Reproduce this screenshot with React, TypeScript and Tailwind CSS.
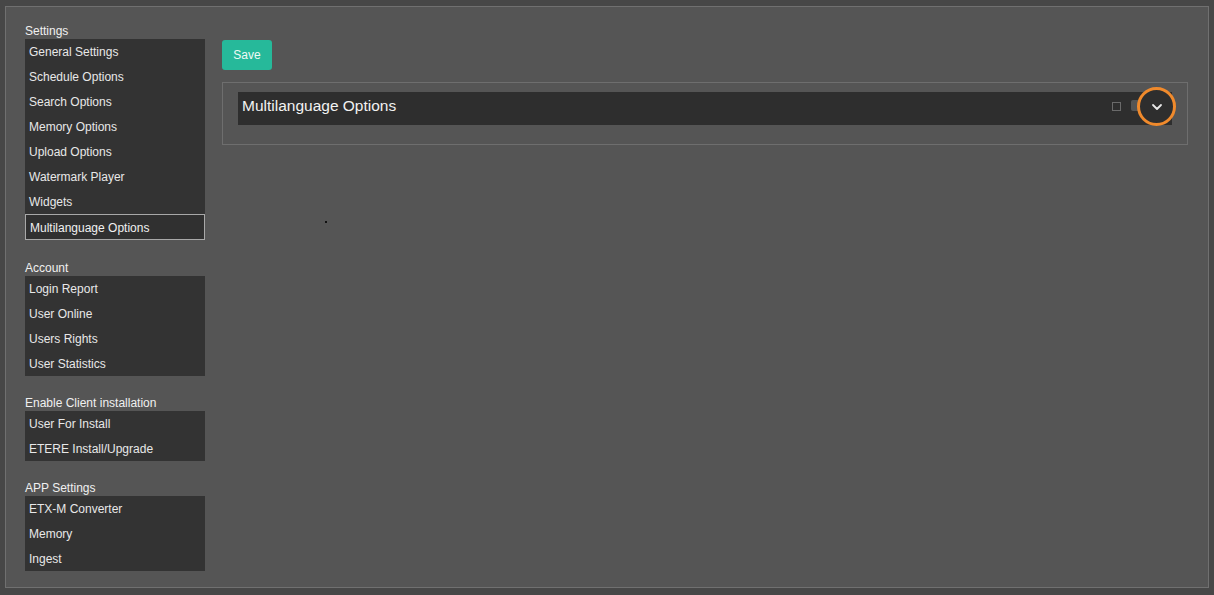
import React from "react";

const groups: { title: string; items: string[]; active?: string }[] = [
  {
    title: "Settings",
    items: [
      "General Settings",
      "Schedule Options",
      "Search Options",
      "Memory Options",
      "Upload Options",
      "Watermark Player",
      "Widgets",
      "Multilanguage Options",
    ],
    active: "Multilanguage Options",
  },
  { title: "Account", items: ["Login Report", "User Online", "Users Rights", "User Statistics"] },
  { title: "Enable Client installation", items: ["User For Install", "ETERE Install/Upgrade"] },
  { title: "APP Settings", items: ["ETX-M Converter", "Memory", "Ingest"] },
];

export default function App() {
  return (
    <div
      className="w-[1214px] h-[595px] bg-[#474747] pt-[6px] pl-[5px] overflow-hidden"
      style={{ fontFamily: '"Liberation Sans", Arial, sans-serif' }}
    >
      <div className="relative w-[1204px] h-[582px] border border-[#707070] bg-[#555555] flex pl-[19px] pt-[16px]">
        {/* Sidebar */}
        <div className="w-[180px] flex flex-col">
          {groups.map((g, gi) => (
            <div key={g.title} className={gi === 0 ? "" : gi === 1 ? "mt-[20px]" : "mt-[19px]"}>
              <div className="h-[16px] leading-[16px] text-[12px] text-[#f0f0f0]">{g.title}</div>
              <div className="bg-[#333333] flex flex-col">
                {g.items.map((it) =>
                  it === g.active ? (
                    <div
                      key={it}
                      className="h-[26px] leading-[24px] pt-[1px] border border-[#a8a8a8] bg-[#303030] pl-[4px] text-[12px] text-[#f0f0f0]"
                    >
                      {it}
                    </div>
                  ) : (
                    <div key={it} className="h-[25px] leading-[26px] pl-[4px] text-[12px] text-[#e8e8e8]">
                      {it}
                    </div>
                  )
                )}
              </div>
            </div>
          ))}
        </div>

        {/* Main */}
        <div className="ml-[17px] flex flex-col pt-[17px]">
          <button className="w-[50px] h-[30px] rounded-[3px] bg-[#26b99a] text-[12px] text-[#eefaf6] flex items-center justify-center">
            Save
          </button>
          <div className="mt-[12px] w-[966px] h-[63px] border border-[#6e6e6e] pt-[9px] pl-[15px] pr-[15px]">
            <div className="relative h-[33px] bg-[#2e2e2e] flex items-center pl-[4px]">
              <span className="text-[15.5px] leading-[20px] text-[#f2f2f2] pb-[6px]">Multilanguage Options</span>
              <div className="ml-auto mr-[51px] mb-[4px] w-[9px] h-[9px] border border-[#6a6a6a]" />
              <div className="absolute right-[30px] top-[8px] w-[11px] h-[11px] rounded-[2px] bg-[#555]" />
              {/* Annotation circle */}
              <div className="absolute right-[-4px] top-[-5px] w-[39px] h-[39px] rounded-full border-[3px] border-[#f08a2c] bg-[#2e2e2e] flex items-center justify-center">
                <svg width="12" height="8" viewBox="0 0 12 8" fill="none">
                  <path d="M2 2 L6 6 L10 2" stroke="#e8e8e8" strokeWidth="1.8" strokeLinecap="round" strokeLinejoin="round" />
                </svg>
              </div>
            </div>
          </div>
        </div>

        <div className="absolute left-[319px] top-[214px] w-[2px] h-[2px] bg-[#111]" />
      </div>
    </div>
  );
}
